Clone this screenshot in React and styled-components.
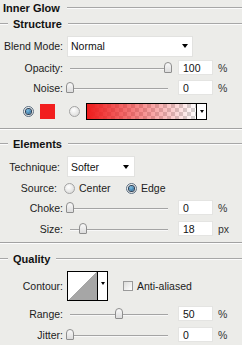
import React from 'react';
import styled, { createGlobalStyle } from 'styled-components';

const GlobalStyle = createGlobalStyle`
  html, body {
    margin: 0;
    padding: 0;
    background: #ecece9;
  }
`;

const Panel = styled.div`
  width: 242px;
  height: 345px;
  overflow: hidden;
  background: #ecece9;
  display: flex;
  flex-direction: column;
  font-family: 'Liberation Sans', Arial, sans-serif;
  font-size: 10.5px;
  color: #1c1c1c;
`;

const Legend = styled.div`
  display: flex;
  align-items: center;
  height: ${(p) => p.$h}px;
  margin-top: ${(p) => p.$mt || 0}px;
  padding-left: ${(p) => (p.$dash ? 0 : 3)}px;

  &::before {
    content: '';
    display: ${(p) => (p.$dash ? 'block' : 'none')};
    width: 8px;
    border-top: 1px solid #a7a7a7;
    border-bottom: 1px solid #fbfbfb;
    margin-right: 5px;
  }

  &::after {
    content: '';
    flex: 1;
    border-top: 1px solid #a7a7a7;
    border-bottom: 1px solid #fbfbfb;
    margin-left: ${(p) => p.$gap || 6}px;
  }
`;

const LegendText = styled.span`
  font-weight: bold;
  font-size: 11px;
  color: #111;
`;

const Divider = styled.div`
  margin-top: ${(p) => p.$mt}px;
  border-top: 1px solid #a2a2a2;
  border-bottom: 1px solid #fdfdfd;
`;

const Row = styled.div`
  display: flex;
  align-items: center;
  height: ${(p) => p.$h}px;
  margin-top: ${(p) => p.$mt || 0}px;
  flex-shrink: 0;
`;

const Label = styled.div`
  width: 63px;
  flex-shrink: 0;
  box-sizing: border-box;
  text-align: right;
  padding-right: ${(p) => p.$pr || 0}px;
  white-space: nowrap;
`;

const Select = styled.div`
  margin-left: 4px;
  width: ${(p) => p.$w}px;
  height: 21px;
  box-sizing: border-box;
  background: #fff;
  border: 1px solid #e2e2e0;
  display: flex;
  align-items: center;
  padding: 0 ${(p) => p.$arrowPad}px 0 3px;
`;

const SelectValue = styled.span`
  flex: 1;
  color: #111;
`;

const Arrow = styled.span`
  width: 0;
  height: 0;
  border-left: ${(p) => p.$s || 3.5}px solid transparent;
  border-right: ${(p) => p.$s || 3.5}px solid transparent;
  border-top: ${(p) => (p.$s ? p.$s + 1 : 4)}px solid #000;
`;

const Slider = styled.div`
  position: relative;
  margin-left: 3px;
  width: 106px;
  height: 14px;

  &::before {
    content: '';
    position: absolute;
    left: 4px;
    right: 4px;
    top: 7px;
    border-top: 1px solid #a4a4a4;
    border-bottom: 1px solid #f8f8f8;
  }
`;

const Thumb = styled.div`
  position: absolute;
  top: 1px;
  width: 8px;
  height: 11px;
  box-sizing: border-box;
  border: 1px solid #8e8e8e;
  border-radius: 4px 4px 1px 1px;
  background: linear-gradient(#fafafa, #dcdcdc);
`;

const NumBox = styled.div`
  margin-left: 6px;
  width: 35px;
  height: 15px;
  box-sizing: border-box;
  background: #fff;
  border: 1px solid #e4e4e2;
  padding-left: 4px;
  display: flex;
  align-items: center;
  color: #111;
`;

const Unit = styled.span`
  margin-left: 5px;
  color: #333;
`;

const Radio = styled.span`
  width: 11px;
  height: 11px;
  flex-shrink: 0;
  box-sizing: border-box;
  border-radius: 50%;
  border: 1px solid ${(p) => (p.$on ? '#5c6f82' : '#a3a3a3')};
  background: radial-gradient(circle at 40% 35%, #ffffff, #d4d4d2);
  margin-left: ${(p) => p.$ml || 0}px;
  display: flex;
  align-items: center;
  justify-content: center;

  &::after {
    content: '';
    display: ${(p) => (p.$on ? 'block' : 'none')};
    width: 5px;
    height: 5px;
    border-radius: 50%;
    background: radial-gradient(circle at 40% 35%, #7cc0e6, #1c5584);
    box-shadow: 0 0 0 1px #2b3f55;
  }
`;

const Swatch = styled.span`
  margin-left: 6px;
  width: 15px;
  height: 15px;
  background: #f21e1e;
`;

const GradientBox = styled.div`
  margin-left: 6px;
  width: 121px;
  height: 17px;
  box-sizing: border-box;
  border: 1px solid #000;
  display: flex;
`;

const GradientFill = styled.div`
  flex: 1;
  background:
    linear-gradient(to right, rgba(238, 28, 28, 1), rgba(238, 28, 28, 0)),
    repeating-conic-gradient(#d4d4d4 0% 25%, #ffffff 0% 50%) 0 0 / 8px 8px;
`;

const DropPart = styled.div`
  width: ${(p) => p.$w}px;
  border-left: 1px solid #000;
  background: #fff;
  display: flex;
  justify-content: center;
  padding-top: ${(p) => p.$top}px;
  box-sizing: border-box;
`;

const Option = styled.div`
  display: flex;
  align-items: center;
  width: ${(p) => p.$w}px;
  margin-left: ${(p) => p.$ml || 0}px;
`;

const OptionText = styled.span`
  margin-left: 4px;
`;

const ContourBox = styled.div`
  margin-left: 4px;
  width: 41px;
  height: 30px;
  box-sizing: border-box;
  border: 1px solid #000;
  display: flex;
`;

const ContourPic = styled.div`
  flex: 1;
  background: linear-gradient(to bottom right, #ffffff 50%, #a6a6a6 50%);
`;

const Check = styled.span`
  margin-left: 15px;
  width: 10px;
  height: 10px;
  box-sizing: border-box;
  border: 1px solid #9a9a9a;
  background: linear-gradient(135deg, #dcdcda, #ffffff);
`;

const SliderRow = ({ label, value, unit, pos, h = 21, mt }) => (
  <Row $h={h} $mt={mt}>
    <Label>{label}</Label>
    <Slider>
      <Thumb style={{ left: `${pos * 98}px` }} />
    </Slider>
    <NumBox>{value}</NumBox>
    <Unit>{unit}</Unit>
  </Row>
);

export default function App() {
  return (
    <Panel>
      <GlobalStyle />
      <Legend $h={16} $gap={7}>
        <LegendText>Inner Glow</LegendText>
      </Legend>
      <Legend $h={17} $dash>
        <LegendText>Structure</LegendText>
      </Legend>

      <Row $h={21} $mt={3}>
        <Label>Blend Mode:</Label>
        <Select $w={126} $arrowPad={4}>
          <SelectValue>Normal</SelectValue>
          <Arrow />
        </Select>
      </Row>
      <SliderRow label="Opacity:" value="100" unit="%" pos={1} h={20} mt={1} />
      <SliderRow label="Noise:" value="0" unit="%" pos={0} h={20} />

      <Row $h={20} $mt={4}>
        <Radio $on $ml={23} />
        <Swatch />
        <Radio $ml={14} />
        <GradientBox>
          <GradientFill />
          <DropPart $w={10} $top={6}>
            <Arrow $s={2.5} />
          </DropPart>
        </GradientBox>
      </Row>

      <Divider $mt={6} />

      <Legend $h={16} $mt={7} $dash>
        <LegendText>Elements</LegendText>
      </Legend>
      <Row $h={21} $mt={4}>
        <Label $pr={3}>Technique:</Label>
        <Select $w={68} $arrowPad={5}>
          <SelectValue>Softer</SelectValue>
          <Arrow />
        </Select>
      </Row>
      <Row $h={18} $mt={2}>
        <Label $pr={6}>Source:</Label>
        <Option $w={62} $ml={1}>
          <Radio />
          <OptionText>Center</OptionText>
        </Option>
        <Option $w={60}>
          <Radio $on />
          <OptionText>Edge</OptionText>
        </Option>
      </Row>
      <SliderRow label="Choke:" value="0" unit="%" pos={0} />
      <SliderRow label="Size:" value="18" unit="px" pos={0.13} />

      <Divider $mt={3} />

      <Legend $h={17} $mt={6} $dash>
        <LegendText>Quality</LegendText>
      </Legend>
      <Row $h={30} $mt={4}>
        <Label>Contour:</Label>
        <ContourBox>
          <ContourPic />
          <DropPart $w={10} $top={10}>
            <Arrow $s={2.5} />
          </DropPart>
        </ContourBox>
        <Check />
        <OptionText>Anti-aliased</OptionText>
      </Row>
      <SliderRow label="Range:" value="50" unit="%" pos={0.5} mt={2} />
      <SliderRow label="Jitter:" value="0" unit="%" pos={0} />
    </Panel>
  );
}
